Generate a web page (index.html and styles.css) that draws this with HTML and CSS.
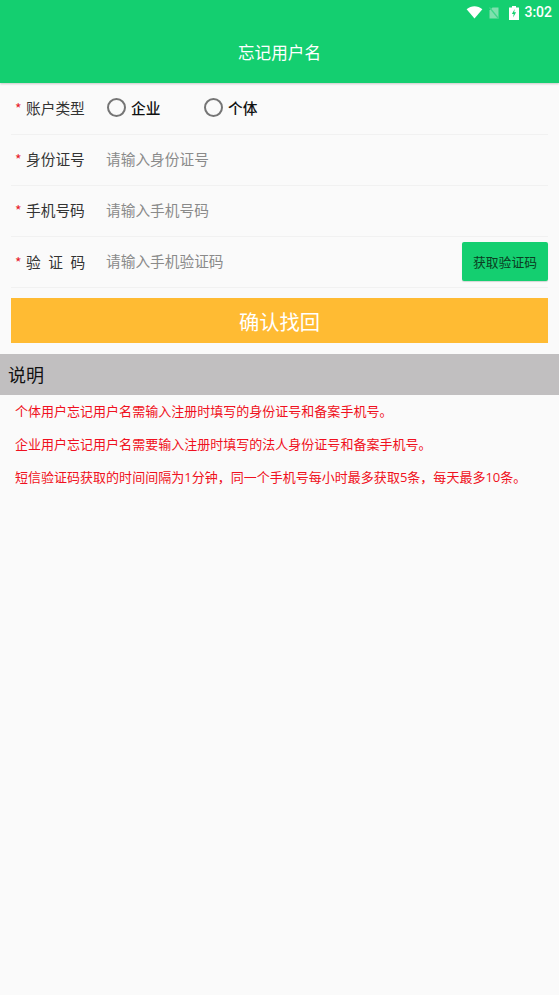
FILE: index.html
```html
<!DOCTYPE html>
<html lang="zh-CN">
<head>
<meta charset="utf-8">
<title>忘记用户名</title>
<link rel="stylesheet" href="styles.css">
</head>
<body>
<header class="appbar">
  <div class="status">
    <svg class="ico-wifi" viewBox="0 0 18 14"><path d="M0.5 3.5C5.5 -0.8 12.5 -0.8 17.5 3.5L9 13.5Z" fill="#fff"/></svg>
    <svg class="ico-sim" viewBox="0 0 10 12"><path d="M3.5 0.5H9.5V11.5H0.5V3.5Z" fill="#7fe0ae"/><path d="M0.5 0.5L9.5 11.5" stroke="#3fd68a" stroke-width="1.2"/></svg>
    <svg class="ico-bat" viewBox="0 0 10 14"><path d="M3 0H7V1.5H10V14H0V1.5H3Z" fill="#fff"/><path d="M5.7 3L2.9 8H4.7L4.1 11.5L7.1 6.3H5.2Z" fill="#14cf70"/></svg>
    <span class="time">3:02</span>
  </div>
  <h1 class="title">忘记用户名</h1>
</header>
<main>
  <form class="form">
    <div class="row row-first">
      <span class="label"><i class="star">*</i><span class="label-text">账户类型</span></span>
      <span class="radio"><span class="circle"></span>企业</span>
      <span class="radio"><span class="circle"></span>个体</span>
    </div>
    <div class="row">
      <span class="label"><i class="star">*</i><span class="label-text">身份证号</span></span>
      <span class="hint">请输入身份证号</span>
    </div>
    <div class="row">
      <span class="label"><i class="star">*</i><span class="label-text">手机号码</span></span>
      <span class="hint">请输入手机号码</span>
    </div>
    <div class="row row-code">
      <span class="label"><i class="star">*</i><span class="label-text spaced">验证码</span></span>
      <span class="hint hint-code">请输入手机验证码</span>
      <span class="code-btn">获取验证码</span>
    </div>
    <div class="submit">确认找回</div>
  </form>
  <section>
    <h2 class="note-head">说明</h2>
    <div class="notes">
      <p>个体用户忘记用户名需输入注册时填写的身份证号和备案手机号。</p>
      <p>企业用户忘记用户名需要输入注册时填写的法人身份证号和备案手机号。</p>
      <p>短信验证码获取的时间间隔为1分钟，同一个手机号每小时最多获取5条，每天最多10条。</p>
    </div>
  </section>
</main>
</body>
</html>
```
FILE: styles.css
```css
* { box-sizing: border-box; }
html, body { margin: 0; padding: 0; }
body {
  width: 559px;
  height: 995px;
  overflow: hidden;
  background: #fafafa;
  font-family: "Noto Sans CJK SC", "Noto Sans", sans-serif;
}
.appbar {
  height: 83px;
  background: #14cf70;
  box-shadow: 0 1px 2px rgba(0,0,0,.2);
  color: #fff;
}
.status {
  height: 25px;
  display: flex;
  align-items: center;
  justify-content: flex-end;
  padding-right: 7px;
}
.ico-wifi { width: 17px; height: 13px; margin-right: 6px; }
.ico-sim { width: 10px; height: 12px; margin-right: 10px; }
.ico-bat { width: 10px; height: 14px; margin-right: 5px; }
.time { font-family: "Roboto", sans-serif; font-size: 14px; font-weight: 500; line-height: 25px; }
.title {
  margin: 0;
  height: 58px;
  line-height: 54px;
  text-align: center;
  font-size: 16.6px;
  font-weight: 400;
}
.form { padding: 0 11px; }
.row {
  height: 51px;
  display: flex;
  align-items: center;
  border-bottom: 1px solid #f1f1f1;
  font-size: 14.7px;
  line-height: 20px;
  padding-bottom: 2px;
}
.row-first { height: 52px; padding-bottom: 2px; }
.row-code { padding-bottom: 0; }
.label { display: flex; align-items: center; width: 95px; padding-left: 4px; color: #333; flex: none; }
.star { font-style: normal; color: #e8202a; width: 11px; font-size: 14px; }
.label-text { width: 60px; white-space: nowrap; }
.spaced { letter-spacing: 7.5px; }
.radio { display: flex; align-items: center; color: #111; width: 97px; font-weight: 500; }
.circle {
  width: 19px; height: 19px; border: 2px solid #757575; border-radius: 50%;
  margin-right: 5px; flex: none; margin-left: 1px;
}
.hint { color: #8a8a8a; flex: 1; }
.hint-code { padding-bottom: 2px; }
.code-btn {
  width: 86px; height: 39px; line-height: 39px; text-align: center;
  background: #14cf70; border-radius: 2px; color: #0b3d22; font-size: 12.8px;
  box-shadow: 0 1px 1px rgba(0,0,0,.15);
  margin-top: -2px;
}
.submit {
  margin-top: 10px;
  height: 45px; line-height: 47px; text-align: center;
  background: #ffbb33; color: #fff; font-size: 20.3px;
}
.note-head {
  margin: 11px 0 0;
  height: 41px; line-height: 40px;
  padding-left: 8px;
  background: #c1bfc0;
  color: #111;
  font-size: 18px; font-weight: 400;
}
.notes { padding: 6px 15px 0; }
.notes p {
  margin: 0 0 13px;
  height: 20px; line-height: 20px;
  color: #f01020;
  font-family: "Open Sans", "Noto Sans CJK SC", sans-serif;
  font-size: 13.03px;
  white-space: nowrap;
}
```
